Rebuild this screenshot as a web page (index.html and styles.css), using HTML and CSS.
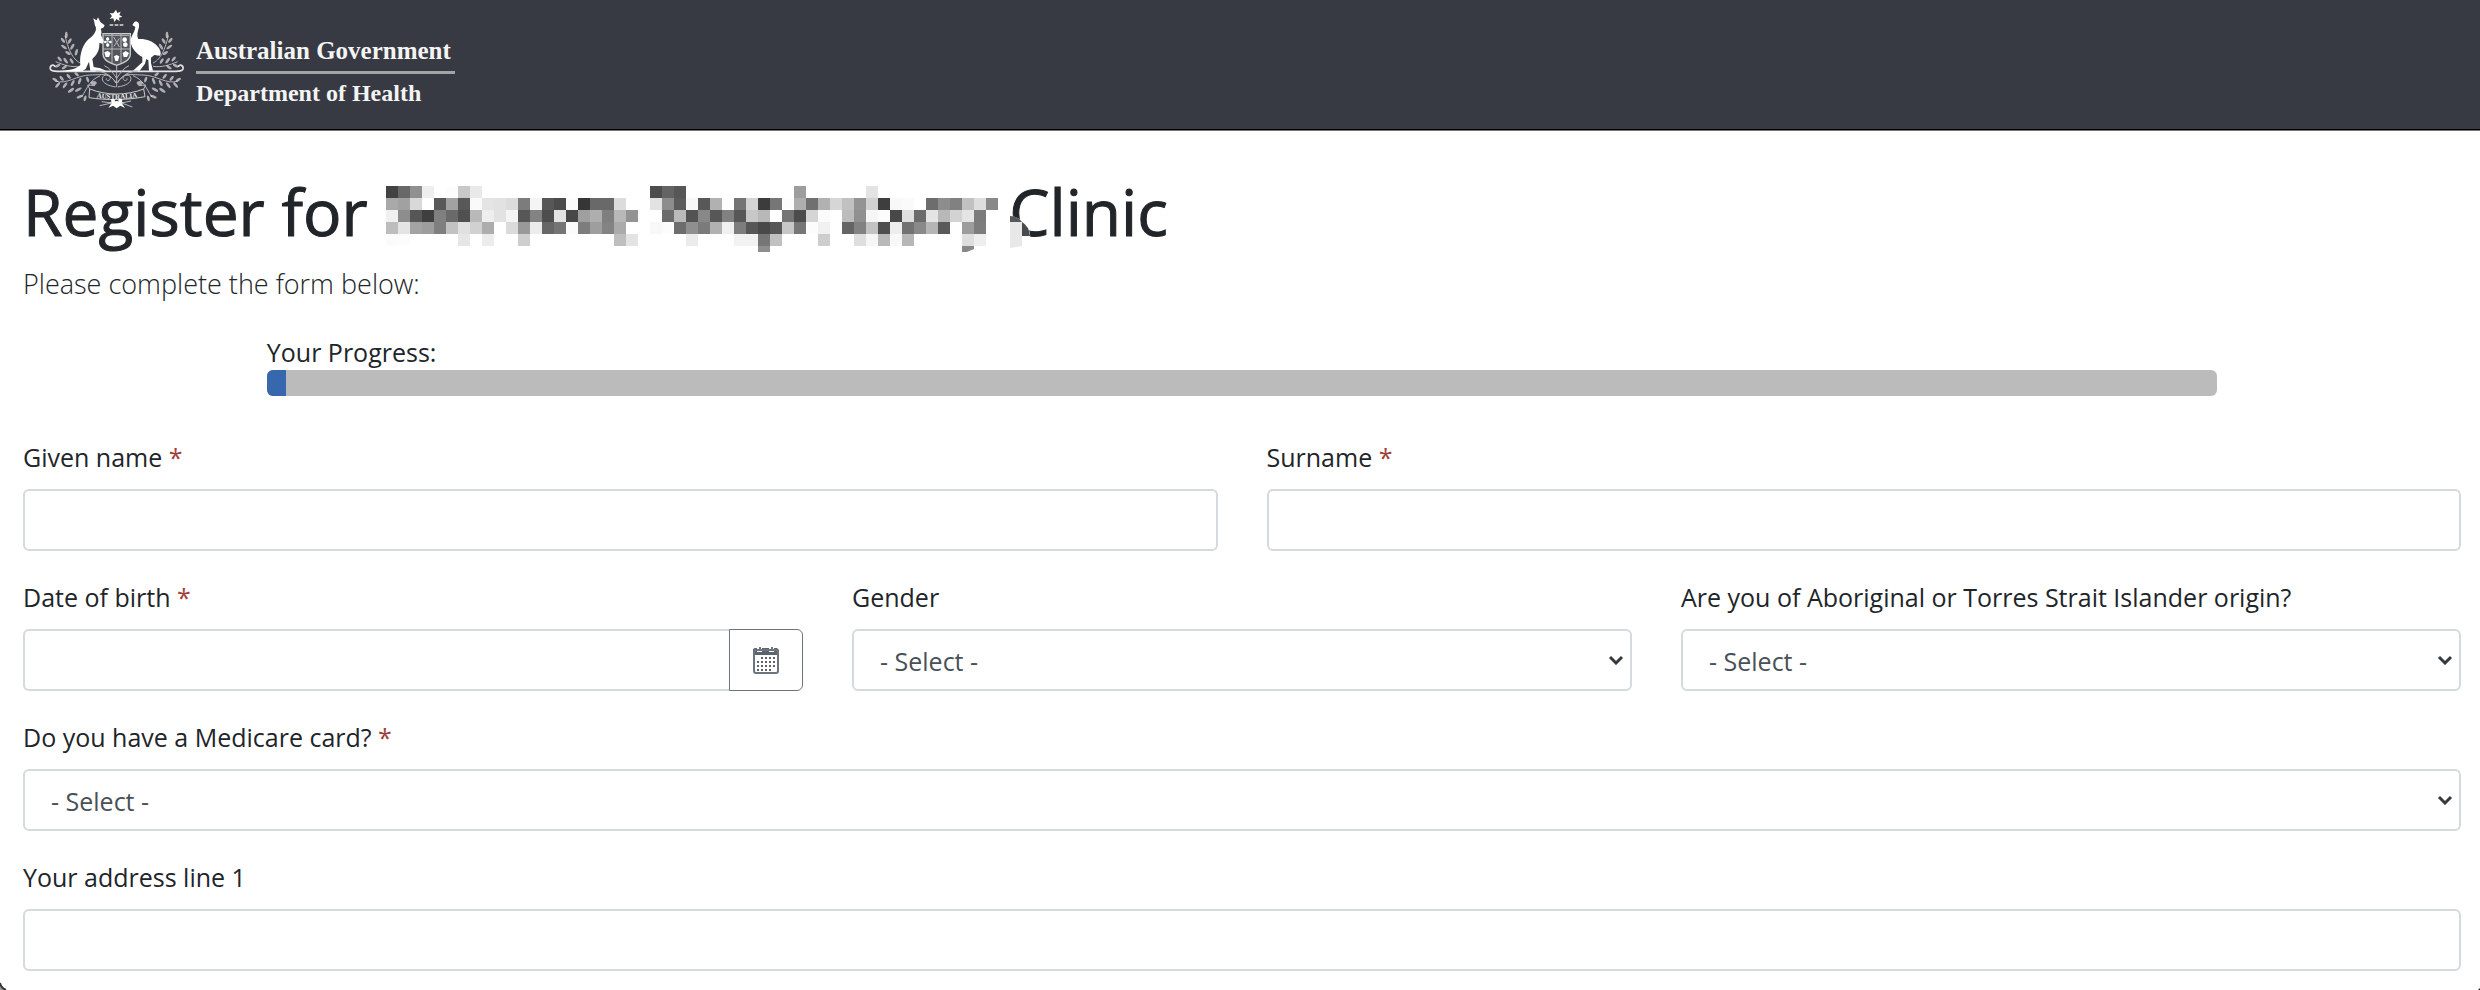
FILE: index.html
```html
<!DOCTYPE html>
<html lang="en">
<head>
<meta charset="utf-8">
<meta name="viewport" content="width=device-width, initial-scale=1">
<title>Clinic registration</title>
<link rel="stylesheet" href="styles.css">
</head>
<body>
<header class="site-header">
  <svg class="crest" viewBox="143 28 414 300" role="img" aria-label="Commonwealth Coat of Arms">
    <defs>
      <g id="sprig">
        <path class="line" d="M240 190C222 182 206 160 194 108M240 200C214 204 190 196 166 186"/>
        <g class="leaf">
          <ellipse cx="198" cy="106" rx="4" ry="10"/><ellipse cx="188" cy="122" rx="4" ry="9" transform="rotate(-40 188 122)"/>
          <ellipse cx="208" cy="124" rx="4" ry="9" transform="rotate(35 208 124)"/><ellipse cx="191" cy="142" rx="4" ry="10" transform="rotate(-55 191 142)"/>
          <ellipse cx="216" cy="141" rx="4" ry="10" transform="rotate(30 216 141)"/><ellipse cx="203" cy="160" rx="4" ry="9" transform="rotate(-60 203 160)"/>
          <ellipse cx="228" cy="158" rx="4" ry="10" transform="rotate(15 228 158)"/>
          <ellipse cx="178" cy="178" rx="4" ry="9" transform="rotate(-40 178 178)"/><ellipse cx="172" cy="198" rx="4" ry="9" transform="rotate(65 172 198)"/>
          <ellipse cx="196" cy="183" rx="4" ry="10" transform="rotate(-35 196 183)"/><ellipse cx="192" cy="203" rx="4" ry="9" transform="rotate(60 192 203)"/>
          <ellipse cx="214" cy="184" rx="4" ry="9" transform="rotate(-35 214 184)"/>
        </g>
      </g>
      <g id="lower">
        <path class="line" d="M346 250C330 216 300 226 270 226C230 226 200 256 164 244M300 228C270 240 262 262 244 292M346 262C322 258 306 250 306 236C308 222 330 222 330 236C328 246 316 244 318 236"/>
        <g class="leaf">
          <ellipse cx="164" cy="240" rx="4" ry="9" transform="rotate(-60 164 240)"/><ellipse cx="172" cy="256" rx="4" ry="10" transform="rotate(40 172 256)"/>
          <ellipse cx="184" cy="236" rx="4" ry="9" transform="rotate(-40 184 236)"/><ellipse cx="194" cy="257" rx="4" ry="10" transform="rotate(35 194 257)"/>
          <ellipse cx="205" cy="230" rx="4" ry="9" transform="rotate(-40 205 230)"/><ellipse cx="217" cy="250" rx="4" ry="10" transform="rotate(25 217 250)"/>
          <ellipse cx="229" cy="224" rx="4" ry="8" transform="rotate(-50 229 224)"/><ellipse cx="238" cy="244" rx="4" ry="10" transform="rotate(20 238 244)"/>
          <ellipse cx="212" cy="272" rx="4" ry="11" transform="rotate(55 212 272)"/><ellipse cx="234" cy="270" rx="4" ry="11" transform="rotate(60 234 270)"/>
          <ellipse cx="238" cy="291" rx="4" ry="10" transform="rotate(70 238 291)"/><ellipse cx="254" cy="296" rx="4" ry="9" transform="rotate(15 254 296)"/>
          <ellipse cx="262" cy="240" rx="4" ry="9" transform="rotate(-20 262 240)"/><ellipse cx="280" cy="250" rx="9" ry="6"/>
        </g>
      </g>
    </defs>
    <path class="solid" d="M347 30L351 40L361 36L357 46L366 51L356 54L358 65L349 58L342 67L339 56L328 57L335 49L328 41L339 41Z"/>
    <path class="dash" d="M328 76H369"/>
    <use href="#sprig"/><use href="#sprig" transform="translate(698 0) scale(-1 1)"/>
    <use href="#lower"/><use href="#lower" transform="translate(698 0) scale(-1 1)"/>
    <path class="rail" d="M164 202C160 190 148 198 150 208C152 215 162 215 172 215H526C536 215 546 215 548 208C550 198 538 190 534 202"/>
    <path class="shield" d="M308 102H390V164C388 184 368 190 349 197C330 190 310 184 308 164Z"/>
    <path class="line" d="M308 148H390M335 102V148M362 102V148M335 148V190M362 148V190M312 107H386"/>
    <path class="line" d="M322 112V142M313 126H332M340 112L357 142M341 140L357 116"/>
    <g class="solid">
      <circle cx="322" cy="118" r="5"/><circle cx="322" cy="136" r="5"/><circle cx="315" cy="127" r="4"/><circle cx="330" cy="127" r="4"/>
      <circle cx="373" cy="120" r="7"/><circle cx="375" cy="135" r="7"/><path d="M312 158L322 154L331 160L326 172H316ZM341 170L349 166L357 170L353 184H345ZM367 160L376 154L386 160L380 172H370Z"/>
    </g>
    <path class="solid" d="M278 56L289 62L293 53L300 67L313 77L309 84L301 87C304 94 304 99 302 106L310 124L306 132L297 130C298 152 290 165 276 178L280 202L300 206L318 213H270L266 186L256 208L246 214H176C210 212 228 208 240 196C236 165 248 128 272 113C281 104 288 95 287 84C281 76 284 66 278 56Z"/>
    <path class="solid" d="M396 76L402 67C412 63 418 70 416 82C413 95 408 105 414 118C434 116 458 124 470 138C482 150 483 162 479 168L462 166L452 174V190L458 213H446L444 182L438 178L434 192L418 213H398L426 188V172C408 162 394 147 391 127C390 110 403 100 405 82Z"/>
    <path class="line" d="M349 198V262M349 250C326 222 310 216 286 214M349 250C372 222 388 216 412 214M349 236C338 220 330 206 312 198M349 236C360 220 368 206 386 198"/>
    <path class="ribbon" d="M268 268C320 288 378 288 430 268L434 291C378 302 320 302 266 294Z"/>
    <path class="line" d="M268 268L262 256L284 258M430 268L436 256L414 258"/>
    <path id="motto-arc" fill="none" d="M274 291C320 300 378 300 426 290"/>
    <text class="motto"><textPath href="#motto-arc" startOffset="50%">AUSTRALIA</textPath></text>
    <g class="solid"><circle cx="338" cy="303" r="6"/><circle cx="360" cy="303" r="6"/><path d="M326 308L349 304L372 308L366 313L374 325L360 318L349 326L338 318L324 325L332 313Z"/></g>
    <path class="line" d="M298 318L334 310L304 306M396 322L364 310L392 304"/>
  </svg>
  <div class="agency">
    <span class="agency-government">Australian Government</span>
    <span class="agency-department">Department of Health</span>
  </div>
</header>

<main class="page">
  <h1 class="title">Register for <svg class="redacted" viewBox="0 0 648 66" aria-hidden="true"></svg><span class="title-end">Clinic</span></h1>
  <p class="lead">Please complete the form below:</p>

  <div class="progress-block">
    <span id="progress-label">Your Progress:</span>
    <div class="progress" role="progressbar" aria-labelledby="progress-label" aria-valuenow="1" aria-valuemin="0" aria-valuemax="100">
      <div class="progress-fill" style="width: 1%"></div>
    </div>
  </div>

  <form class="form">
    <div class="row">
      <div class="field">
        <label for="given">Given name <span class="required">*</span></label>
        <input class="control" id="given" type="text" required>
      </div>
      <div class="field">
        <label for="surname">Surname <span class="required">*</span></label>
        <input class="control" id="surname" type="text" required>
      </div>
    </div>
    <div class="row">
      <div class="field">
        <label for="dob">Date of birth <span class="required">*</span></label>
        <div class="input-group">
          <input class="control" id="dob" type="text" required>
          <button class="calendar-button" type="button" aria-label="Choose date">
            <svg class="calendar-icon" viewBox="0 0 26 29" aria-hidden="true">
              <path fill="#5c646c" d="M0 3L2 2H4V6H8V2H10V2H16V6H20V2H24L26 4V9H0Z"/>
              <path fill="#fff" d="M4 1H9V6H4ZM16 1H21V6H16Z"/>
              <path fill="#6c757d" d="M6 1H8V5H6ZM18 1H20V5H18Z"/>
              <rect x="1" y="4" width="24" height="23" rx="2" fill="none" stroke="#6c757d" stroke-width="2"/>
              <path stroke="#5c646c" stroke-width="2" stroke-dasharray="2 2" fill="none" d="M8 12H22M4 16H22M4 20H22M4 24H18"/>
            </svg>
          </button>
        </div>
      </div>
      <div class="field">
        <label for="gender">Gender</label>
        <div class="select-wrap">
          <select class="control" id="gender"><option>- Select -</option></select>
          <svg class="chevron" viewBox="0 0 16 10" aria-hidden="true"><path d="M2 2L8 8L14 2"/></svg>
        </div>
      </div>
      <div class="field">
        <label for="origin">Are you of Aboriginal or Torres Strait Islander origin?</label>
        <div class="select-wrap">
          <select class="control" id="origin"><option>- Select -</option></select>
          <svg class="chevron" viewBox="0 0 16 10" aria-hidden="true"><path d="M2 2L8 8L14 2"/></svg>
        </div>
      </div>
    </div>
    <div class="row">
      <div class="field">
        <label for="medicare">Do you have a Medicare card? <span class="required">*</span></label>
        <div class="select-wrap">
          <select class="control" id="medicare" required><option>- Select -</option></select>
          <svg class="chevron" viewBox="0 0 16 10" aria-hidden="true"><path d="M2 2L8 8L14 2"/></svg>
        </div>
      </div>
    </div>
    <div class="row">
      <div class="field">
        <label for="address1">Your address line 1</label>
        <input class="control" id="address1" type="text">
      </div>
    </div>
  </form>
</main>
<svg class="corner corner-left" viewBox="0 0 8 8" aria-hidden="true"><path fill="#999" d="M0 1Q1 6 6 8H0Z"/><path fill="none" stroke="#333" stroke-width="2" d="M0 1Q1 6 6 8"/></svg>
<svg class="corner corner-right" viewBox="0 0 8 8" aria-hidden="true"><path fill="#222" d="M8 6V8H6Z"/></svg>
<script src="redact.js"></script>
</body>
</html>
```

FILE: styles.css
```css
* { box-sizing: border-box; }

body {
  margin: 0;
  background: #fff;
  color: #212529;
  font-family: "Open Sans", "Noto Sans", sans-serif;
  font-size: 25px;
  line-height: 36px;
}

.site-header {
  display: flex;
  align-items: flex-start;
  gap: 10px;
  height: 131px;
  padding: 9px 48px 0;
  background: #373a42;
  border-bottom: 1px solid #777;
  box-shadow: inset 0 -1px #000;
}

.crest { width: 138px; height: 100px; flex: none; }
.solid, .leaf { fill: #fff; }
.leaf { opacity: 0.6; }
.line { fill: none; stroke: #b4b6ba; stroke-width: 3; }
.rail { fill: none; stroke: #e4e4e6; stroke-width: 5; }
.dash { fill: none; stroke: #ddd; stroke-width: 5; stroke-dasharray: 11 4; }
.shield { fill: #52565d; stroke: #ccc; stroke-width: 4; }
.ribbon { fill: #373a42; stroke: #ccc; stroke-width: 3; }
.motto {
  fill: #eee;
  font: bold 21px "Liberation Serif", serif;
  text-anchor: middle;
}

.agency {
  display: flex;
  flex-direction: column;
  padding-top: 26px;
  color: #f4f4f4;
  font-family: "Liberation Serif", serif;
  font-weight: 700;
}

.agency-government {
  padding-right: 4px;
  padding-bottom: 4px;
  border-bottom: 3px solid #a2a4a7;
  font-size: 25px;
  line-height: 32px;
}

.agency-department {
  padding-top: 5px;
  font-size: 24px;
  line-height: 28px;
}

.page { padding: 42px 19px 16px 23px; }

.title {
  display: flex;
  align-items: flex-start;
  margin: 0;
  font-size: 64px;
  font-weight: 400;
  line-height: 78px;
  white-space: pre;
  -webkit-text-stroke: 1px currentColor;
}

.redacted {
  position: relative;
  z-index: 1;
  flex: none;
  width: 648px;
  height: 66px;
  margin: 13px -25px 0 2px;
}

.lead {
  margin: 12px 0 0;
  font-size: 27px;
  font-weight: 300;
  line-height: 40px;
}

.progress-block {
  width: 80%;
  margin: 30px auto 0;
}

.progress-block > span { display: block; }

.progress {
  height: 26px;
  overflow: hidden;
  border-radius: 6px;
  background: #bbb;
}

.progress-fill { height: 100%; background: #3767ad; }

.form {
  display: flex;
  flex-direction: column;
  gap: 28px;
  margin-top: 43px;
}

.row {
  display: grid;
  grid-auto-columns: minmax(0, 1fr);
  grid-auto-flow: column;
  gap: 49px;
}

.field label {
  display: block;
  margin-bottom: 14px;
}

.required { color: #a0403a; }

.control {
  display: block;
  width: 100%;
  height: 62px;
  padding: 2px 26px 0;
  appearance: none;
  border: 2px solid #d5dade;
  border-radius: 6px;
  background: #fff;
  color: #495057;
  font: inherit;
}

.input-group { display: flex; }
.input-group .control { border-right: 0; border-radius: 6px 0 0 6px; }

.calendar-button {
  display: flex;
  align-items: center;
  justify-content: center;
  flex: none;
  width: 74px;
  padding: 0;
  border: 1px solid #6c757d;
  border-radius: 0 6px 6px 0;
  background: #fff;
}

.calendar-icon { width: 26px; height: 29px; }

.select-wrap { display: grid; align-items: center; }
.select-wrap > * { grid-area: 1 / 1; }

.chevron {
  justify-self: end;
  width: 16px;
  height: 10px;
  margin-right: 8px;
  fill: none;
  stroke: #343a40;
  stroke-width: 3;
  pointer-events: none;
}

.corner {
  position: fixed;
  bottom: 0;
  width: 8px;
  height: 8px;
}

.corner-left { left: 0; }
.corner-right { right: 0; }
```

FILE: redact.js
```js
// Mosaic that hides the clinic's name: one two-digit grey level per 12px cell, ".." is empty.
const rows = [
  "42 68 90 ee .. fc c8 e9 .. .. .. .. .. .. .. .. .. .. .. .. .. .. 4d 64 57 .. .. .. .. .. .. .. .. .. 9d .. .. .. .. .. e3",
  "a8 a1 d8 .. 59 a2 58 fa e4 e2 dc 7c f4 57 4c fc 36 69 69 dc .. .. e2 8d 5c f8 58 b1 fd 74 d3 3c 76 fc ae 70 b1 d6 c1 93 d1 3e f8 fa .. 6d 8d 81 c1 dd 89",
  "f0 8d 56 3f 80 6a 50 b9 ee e2 f4 57 83 4e e3 48 9f ae 7f b8 93 .. .. 6c ba 53 88 57 81 57 c7 b8 .. 75 4c d5 fb .. bc 90 f6 fc 48 e0 6b e4 b8 d3 e4 7b",
  "bd e4 a3 9d 7f c2 e0 d1 ad .. db 99 ec 67 75 fb 7d 9e 83 ab .. .. f8 fc 6d 8f 7b b1 f0 7d 57 49 57 c7 76 fc f0 .. 64 82 c3 4f ed 72 89 b5 5a .. 9c 7d",
  "fb fc .. .. .. .. e6 .. ec .. .. ce .. .. .. .. .. .. .. be e3 .. .. .. .. eb .. .. .. f2 f2 76 c1 .. .. .. cd .. .. de f6 b9 f8 b7 .. .. .. .. de ee"
];
const mosaic = document.querySelector(".redacted");
const add = (tag, attributes) => {
  const node = document.createElementNS("http://www.w3.org/2000/svg", tag);
  for (const name in attributes) node.setAttribute(name, attributes[name]);
  mosaic.append(node);
};
rows.forEach((row, y) => row.split(" ").forEach((level, x) => {
  if (level !== "..") {
    add("rect", { x: x * 12, y: y * 12, width: 12, height: 12, fill: "#" + level.repeat(3), "shape-rendering": "crispEdges" });
  }
}));
add("path", { d: "M372 60h12v6h-12z", fill: "#8e8e90" });
add("path", { d: "M576 60h12v3l-12 5z", fill: "#888888" });
add("path", { d: "M624 30q12 1 18 12q3 6 2 10v10h-20z", fill: "#ffffff" });
add("path", { d: "M624 30q8 0 12 6h-12z", fill: "#56585b" });
add("path", { d: "M624 36h12v24l-12 2z", fill: "#e8e8e8" });
add("path", { d: "M636 36q7 4 8 14h-8z", fill: "#484b4e" });
```
